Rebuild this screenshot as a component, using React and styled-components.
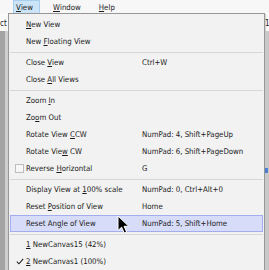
import React from 'react';
import styled, { createGlobalStyle } from 'styled-components';

const GlobalStyle = createGlobalStyle`
  html, body {
    margin: 0;
    padding: 0;
    background: #f0f0f0;
  }
  body {
    font-family: "DejaVu Sans Condensed", "DejaVu Sans", sans-serif;
    font-size: 7.8px;
    color: #1a1a1a;
  }
`;

const menuItems = [
  { label: 'New View', key: 'N' },
  { label: 'New Floating View', key: 'F' },
  { sep: true },
  { label: 'Close View', key: 'V', shortcut: 'Ctrl+W' },
  { label: 'Close All Views', key: 'A' },
  { sep: true },
  { label: 'Zoom In', key: 'I' },
  { label: 'Zoom Out', key: 'o', at: 2 },
  { label: 'Rotate View CCW', key: 'C', shortcut: 'NumPad: 4, Shift+PageUp' },
  { label: 'Rotate View CW', key: 'w', shortcut: 'NumPad: 6, Shift+PageDown' },
  { label: 'Reverse Horizontal', key: 'H', shortcut: 'G', box: true },
  { sep: true },
  { label: 'Display View at 100% scale', key: '1', shortcut: 'NumPad: 0, Ctrl+Alt+0' },
  { label: 'Reset Position of View', key: 'P', shortcut: 'Home' },
  { label: 'Reset Angle of View', key: 'g', shortcut: 'NumPad: 5, Shift+Home', hover: true },
  { sep: true },
  { label: '1 NewCanvas15 (42%)', key: '1' },
  { label: '2 NewCanvas1 (100%)', key: '2', checked: true },
];

function Mnemonic({ text, letter, at }) {
  const idx = at !== undefined ? at : text.indexOf(letter);
  if (idx < 0) return text;
  return (
    <>
      {text.slice(0, idx)}
      <U>{text[idx]}</U>
      {text.slice(idx + 1)}
    </>
  );
}

function App() {
  return (
    <Page>
      <GlobalStyle />
      <MenuBar>
        <BarItem $active><U>V</U>iew</BarItem>
        <BarItem><U>W</U>indow</BarItem>
        <BarItem><U>H</U>elp</BarItem>
      </MenuBar>
      <Body>
        <LeftStrip>
          <StripTop>ct</StripTop>
          <StripGray />
        </LeftStrip>
        <Menu>
          {menuItems.map((item, i) => {
            if (item.sep) return <Separator key={i} />;
            return (
              <Item key={i} $hover={item.hover}>
                <IconCell>
                  {item.box && <CheckBox />}
                  {item.checked && (
                    <svg width="8" height="7" viewBox="0 0 8 7">
                      <path d="M0.8 3.6 L3 5.8 L7.2 0.8" fill="none" stroke="#222" strokeWidth="1.1" />
                    </svg>
                  )}
                </IconCell>
                <Label>
                  <Mnemonic text={item.label} letter={item.key} at={item.at} />
                </Label>
                <Shortcut>{item.shortcut}</Shortcut>
              </Item>
            );
          })}
          <Cursor width="13" height="19" viewBox="0 0 13 19">
            <path d="M1 1 L1 15.5 L4.6 12.2 L7.2 18 L9.6 17 L7.1 11.3 L11.8 11.3 Z" fill="#000" stroke="#fff" strokeWidth="1" strokeLinejoin="round" />
          </Cursor>
        </Menu>
        <RightStrip>
          <StripTop>1</StripTop>
          <StripGray $light>
            <BlueMark />
          </StripGray>
        </RightStrip>
      </Body>
    </Page>
  );
}

const Page = styled.div`
  width: 269px;
  height: 270px;
  overflow: hidden;
  display: flex;
  flex-direction: column;
  background: #f0f0f0;
`;

const MenuBar = styled.div`
  height: 13px;
  display: flex;
  align-items: stretch;
  padding-left: 13px;
  background: #f7f7f7;
`;

const BarItem = styled.div`
  display: flex;
  align-items: center;
  padding: 0 6px 0 ${(p) => (p.$active ? '2px' : '6px')};
  margin-right: ${(p) => (p.$active ? '6px' : '4px')};
  width: ${(p) => (p.$active ? '27px' : 'auto')};
  box-sizing: border-box;
  justify-content: ${(p) => (p.$active ? 'center' : 'flex-start')};
  background: ${(p) => (p.$active ? '#cce4f7' : 'transparent')};
  border: 1px solid ${(p) => (p.$active ? '#a8cfee' : 'transparent')};
  border-bottom: none;
`;

const U = styled.span`
  text-decoration: underline;
  text-underline-offset: 1px;
`;

const Body = styled.div`
  flex: 1;
  display: flex;
  min-height: 0;
`;

const LeftStrip = styled.div`
  width: 8px;
  display: flex;
  flex-direction: column;
  overflow: hidden;
`;

const RightStrip = styled.div`
  width: 4px;
  display: flex;
  flex-direction: column;
  overflow: hidden;
`;

const StripTop = styled.div`
  height: 16px;
  background: #fafafa;
  display: flex;
  align-items: center;
  padding-top: 2px;
  font-size: 8px;
  white-space: nowrap;
`;

const StripGray = styled.div`
  flex: 1;
  position: relative;
  background: ${(p) => (p.$light ? '#c9c9c9' : 'linear-gradient(90deg, #a3a3a3 0 5px, #cfcfcf 5px)')};
`;

const BlueMark = styled.div`
  position: absolute;
  left: 0;
  top: 137px;
  width: 3px;
  height: 5px;
  background: #4a7fd0;
`;

const Menu = styled.div`
  position: relative;
  flex: 1;
  align-self: flex-start;
  background: #f2f2f2;
  border: 1px solid #979797;
  padding: 2px 1px 2px;
  box-shadow: 1px 1px 1px rgba(0, 0, 0, 0.15);
`;

const Item = styled.div`
  display: grid;
  grid-template-columns: 15px 116px 1fr;
  align-items: center;
  height: 17px;
  box-sizing: border-box;
  border: 1px solid ${(p) => (p.$hover ? '#a3acee' : 'transparent')};
  background: ${(p) => (p.$hover ? '#d7dcf8' : 'transparent')};
  white-space: nowrap;
`;

const IconCell = styled.div`
  display: flex;
  align-items: center;
  justify-content: center;
  padding-left: 2px;
`;

const CheckBox = styled.div`
  width: 7px;
  height: 7px;
  border: 1px solid #bdbdbd;
  background: #f7f7f7;
`;

const Label = styled.div`
  padding-left: 0;
`;

const Shortcut = styled.div`
  padding-left: 0;
`;

const Separator = styled.div`
  height: 4px;
  display: flex;
  align-items: center;
  &::after {
    content: '';
    flex: 1;
    height: 1px;
    background: #d7d7d7;
  }
`;

const Cursor = styled.svg`
  position: absolute;
  left: 108px;
  top: 201px;
`;

export default App;
